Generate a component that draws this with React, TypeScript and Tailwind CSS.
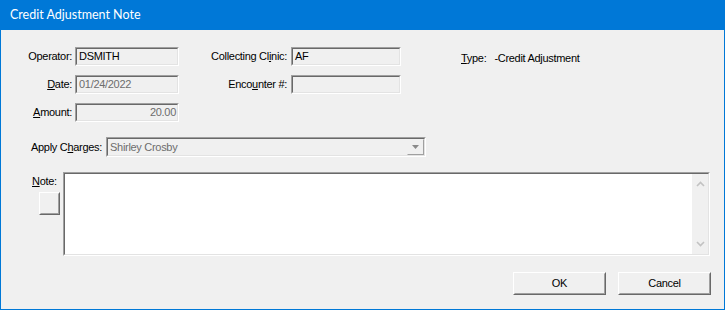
import type { ReactNode } from "react";

const font = "font-['Liberation_Sans',Arial,sans-serif] text-[11px] tracking-[-0.3px] text-black";

// Windows classic sunken edge (text boxes, combos)
const Sunken = ({
  className,
  inner,
  children,
}: {
  className: string;
  inner: string;
  children?: ReactNode;
}) => (
  <div
    className={`border border-t-[#a0a0a0] border-l-[#a0a0a0] border-b-white border-r-white ${className}`}
  >
    <div
      className={`h-full border border-t-[#696969] border-l-[#696969] border-b-[#e3e3e3] border-r-[#e3e3e3] ${inner}`}
    >
      {children}
    </div>
  </div>
);

// Windows classic raised edge (push buttons)
const Raised = ({ className, children }: { className: string; children?: ReactNode }) => (
  <button
    type="button"
    className={`border border-t-white border-l-white border-b-[#696969] border-r-[#696969] bg-[#f0f0f0] p-0 ${className}`}
  >
    <div className="flex h-full items-center justify-center border border-t-[#f0f0f0] border-l-[#f0f0f0] border-b-[#a0a0a0] border-r-[#a0a0a0]">
      {children}
    </div>
  </button>
);

const Field = ({
  value,
  width,
  muted,
  right,
}: {
  value: string;
  width: string;
  muted?: boolean;
  right?: boolean;
}) => (
  <Sunken
    className={`h-[19px] ${width}`}
    inner={`bg-[#f0f0f0] leading-[15px] ${right ? "pr-[1px] text-right" : "pl-[2px]"} ${
      muted ? "text-[#6d6d6d]" : "text-black"
    }`}
  >
    {value}
  </Sunken>
);

export default function App() {
  return (
    <div className={`flex h-[310px] w-[725px] flex-col bg-[#f0f0f0] ${font}`}>
      {/* Title bar */}
      <div className="flex h-[30px] shrink-0 items-center bg-[#0078d7] pl-[10px] font-['Lato',sans-serif] text-[12.5px] tracking-normal text-white">
        Credit Adjustment Note
      </div>

      <div className="flex flex-1 flex-col border-x border-b border-[#0078d7] pt-[17px]">
        {/* Operator / Collecting Clinic / Type */}
        <div className="flex h-[19px] items-center">
          <div className="w-[71px] text-right">Operator:</div>
          <div className="ml-[3px]">
            <Field value="DSMITH" width="w-[104px]" />
          </div>
          <div className="w-[108px] text-right">
            Collecting Cl<span className="underline">i</span>nic:
          </div>
          <div className="ml-[4px]">
            <Field value="AF" width="w-[110px]" />
          </div>
          <div className="ml-[60px] mt-[3px] flex">
            <span>
              <span className="underline">T</span>ype:
            </span>
            <span className="ml-[8px]">-Credit Adjustment</span>
          </div>
        </div>

        {/* Date / Encounter */}
        <div className="mt-[9px] flex h-[19px] items-center">
          <div className="w-[71px] text-right">
            <span className="underline">D</span>ate:
          </div>
          <div className="ml-[3px]">
            <Field value="01/24/2022" width="w-[104px]" muted />
          </div>
          <div className="w-[108px] text-right">
            Enco<span className="underline">u</span>nter #:
          </div>
          <div className="ml-[4px]">
            <Field value="" width="w-[110px]" />
          </div>
        </div>

        {/* Amount */}
        <div className="mt-[9px] flex h-[19px] items-center">
          <div className="w-[71px] text-right">
            <span className="underline">A</span>mount:
          </div>
          <div className="ml-[3px]">
            <Field value="20.00" width="w-[104px]" muted right />
          </div>
        </div>

        {/* Apply Charges */}
        <div className="mt-[15px] flex h-[20px] items-center">
          <div className="pl-[30px]">
            Apply C<span className="underline">h</span>arges:
          </div>
          <Sunken
            className="ml-[4px] h-[20px] w-[320px]"
            inner="flex items-center bg-[#f0f0f0] pl-[2px] text-[#6d6d6d]"
          >
            <span className="flex-1">Shirley Crosby</span>
            <div className="flex h-[16px] w-[17px] items-center justify-center border border-t-[#f0f0f0] border-l-[#f0f0f0] border-b-[#a0a0a0] border-r-[#a0a0a0]">
              <svg width="7" height="4" viewBox="0 0 7 4">
                <path d="M0 0h7L3.5 4z" fill="#8a8a8a" />
              </svg>
            </div>
          </Sunken>
        </div>

        {/* Note */}
        <div className="mt-[15px] flex">
          <div className="flex w-[62px] flex-col">
            <div className="ml-[31px] mt-[2px] leading-[14px]">
              <span className="underline">N</span>ote:
            </div>
            <Raised className="ml-[38px] mt-[4px] h-[23px] w-[21px]" />
          </div>
          <Sunken className="h-[84px] w-[647px]" inner="flex bg-white">
            <div className="flex-1" />
            <div className="flex w-[16px] flex-col items-center justify-between bg-[#f0f0f0] py-[7px]">
              <svg width="9" height="6" viewBox="0 0 9 6">
                <path d="M1 5l3.5-3.5L8 5" fill="none" stroke="#c2c2c2" strokeWidth="1.6" />
              </svg>
              <svg width="9" height="6" viewBox="0 0 9 6">
                <path d="M1 1l3.5 3.5L8 1" fill="none" stroke="#c2c2c2" strokeWidth="1.6" />
              </svg>
            </div>
          </Sunken>
        </div>

        {/* Buttons */}
        <div className="mt-[16px] flex justify-end gap-[12px] pr-[13px]">
          <Raised className="h-[23px] w-[93px]">
            <span className={font}>OK</span>
          </Raised>
          <Raised className="h-[23px] w-[93px]">
            <span className={font}>Cancel</span>
          </Raised>
        </div>
      </div>
    </div>
  );
}
